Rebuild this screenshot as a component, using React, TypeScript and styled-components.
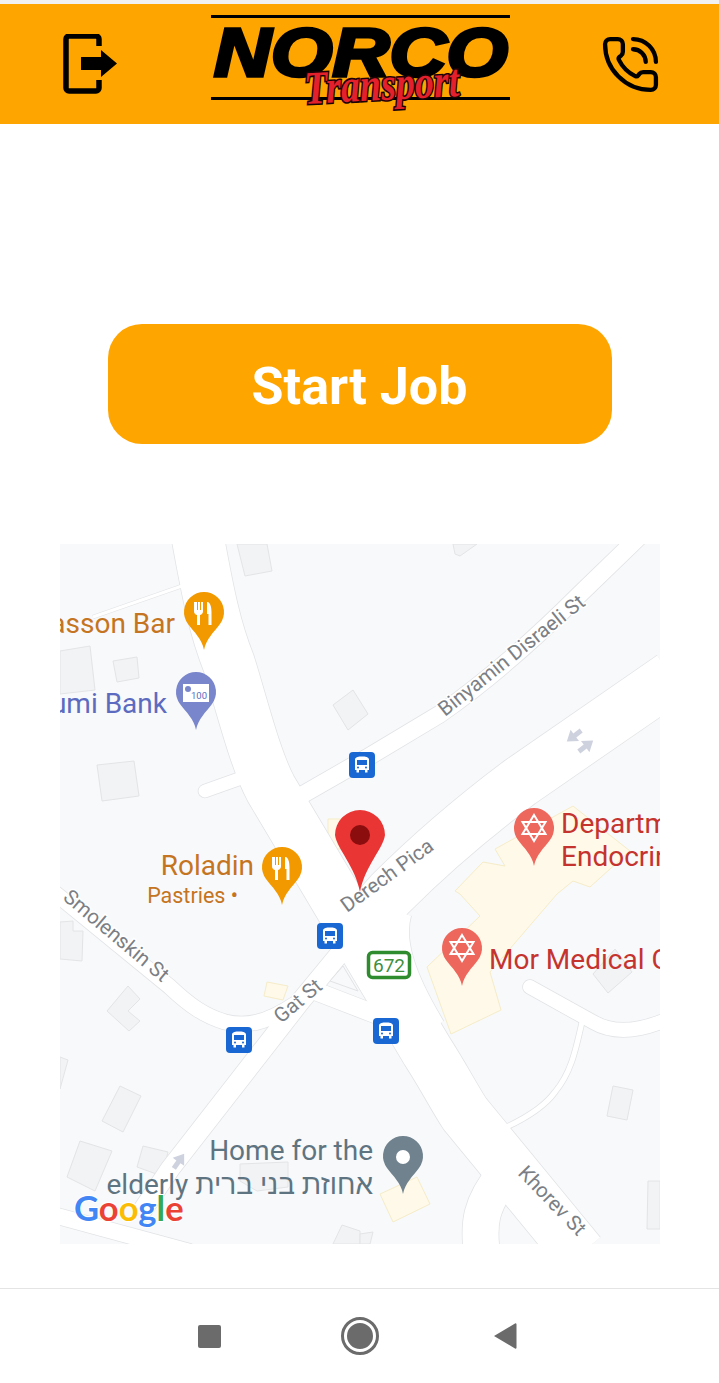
import React, { FC } from "react";
import styled, { createGlobalStyle } from "styled-components";
import { PhoneCall } from "lucide-react";

const GlobalStyle = createGlobalStyle`
  html, body {
    margin: 0;
    padding: 0;
    background: #fff;
    font-family: Roboto, "Liberation Sans", sans-serif;
  }
`;

const Page = styled.div`
  width: 719px;
  height: 1383px;
  display: flex;
  flex-direction: column;
  overflow: hidden;
`;

const StatusStrip = styled.div`
  height: 4px;
  background: #f1f1f1;
`;

const Header = styled.header`
  height: 120px;
  background: #ffa500;
  display: flex;
  align-items: center;
  justify-content: space-between;
  padding: 0 58px 0 63px;
`;

const ExitIcon = styled.svg`
  width: 54px;
  height: 60px;
  display: block;
`;

const PhoneIcon = styled(PhoneCall)`
  display: block;
  margin-left: -5px;
`;

const Logo = styled.svg`
  width: 300px;
  height: 120px;
  display: block;
`;

const NorcoText = styled.text`
  font-family: "Liberation Sans", sans-serif;
  font-weight: 700;
  font-style: italic;
  font-size: 68px;
  fill: #000;
  stroke: #000;
  stroke-width: 3.5px;
`;

const TransportText = styled.text`
  font-family: "Liberation Serif", serif;
  font-weight: 700;
  font-style: italic;
  font-size: 36px;
  fill: #e3202b;
  stroke: #1a0305;
  stroke-width: 2.5px;
  paint-order: stroke;
`;

const Main = styled.main`
  flex: 1;
  display: flex;
  flex-direction: column;
  align-items: center;
  padding-top: 200px;
`;

const StartButton = styled.button`
  width: 504px;
  height: 120px;
  border: 0;
  border-radius: 34px;
  background: #ffa500;
  color: #fff;
  font-family: Roboto, sans-serif;
  font-weight: 700;
  font-size: 52px;
  padding: 5px 0 0;
`;

const MapFrame = styled.div`
  width: 600px;
  height: 700px;
  margin-top: 100px;
  overflow: hidden;
  background: #f8f9fa;
`;

const MapSvg = styled.svg`
  width: 600px;
  height: 700px;
  display: block;
`;

const Label = styled.text<{ $color: string; $size?: number }>`
  font-family: Roboto, "Liberation Sans", sans-serif;
  font-size: ${(p) => p.$size ?? 28}px;
  fill: ${(p) => p.$color};
`;

const StreetLabel = styled.text`
  font-family: Roboto, sans-serif;
  font-size: 20.5px;
  fill: #7b7f85;
  stroke: #fff;
  stroke-width: 3px;
  paint-order: stroke;
`;

const GoogleMark = styled.text`
  font-family: Lato, sans-serif;
  font-size: 34.5px;
  font-weight: 700;
  stroke: #fff;
  stroke-width: 2px;
  paint-order: stroke;
`;

const NavBar = styled.nav`
  height: 94px;
  border-top: 1px solid #e4e4e4;
  display: grid;
  grid-template-columns: repeat(3, 150px);
  justify-content: center;
  justify-items: center;
  align-items: center;
`;

const NavSquare = styled.div`
  width: 23px;
  height: 23px;
  border-radius: 2px;
  background: #6b6b6b;
`;

const NavCircle = styled.div`
  width: 26px;
  height: 26px;
  border-radius: 50%;
  background: #6b6b6b;
  border: 3px solid #fff;
  outline: 3px solid #6b6b6b;
`;

const NavBack = styled.svg`
  width: 24px;
  height: 28px;
  display: block;
  margin-right: 9px;
`;

type Road = { d: string; w: number; cap?: "round" | "butt" };

const roads: Road[] = [
  { d: "M138 -5C148 50 155 85 169 120C183 165 195 215 211 245L367 507C385 535 395 555 405 570L520 710", w: 52 },
  { d: "M612 133L460 238C420 268 370 310 330 350L290 395", w: 52 },
  { d: "M327 365C317 400 332 440 362 490", w: 50 },
  { d: "M300 385L240 458L110 625L80 670", w: 19 },
  { d: "M580 -8L520 50C480 90 430 135 380 170L310 212L235 255", w: 17 },
  { d: "M-10 345L110 443C130 462 145 472 165 478C185 483 205 480 235 460", w: 15 },
  { d: "M145 247L190 231", w: 13, cap: "round" },
  { d: "M250 445L320 472", w: 18 },
  { d: "M470 443L533 478C550 488 575 490 610 474", w: 14, cap: "round" },
  { d: "M522 478C515 510 510 530 495 548C485 562 465 575 440 586", w: 5 },
  { d: "M445 630C420 660 418 680 422 710", w: 36 },
  { d: "M-10 670L130 708", w: 16 },
  { d: "M122 42L33 73", w: 3 },
];

const buildings: string[] = [
  "177,0 207,0 212,27 185,32",
  "0,107 30,102 35,146 0,150",
  "53,117 77,113 79,134 57,138",
  "37,221 74,217 79,252 42,257",
  "273,161 293,146 308,170 288,186",
  "393,0 417,0 400,12 395,10",
  "0,378 13,377 13,387 23,387 22,417 0,415",
  "68,442 80,455 68,467 80,477 69,487 47,467",
  "0,513 8,516 0,545",
  "60,542 81,552 63,588 42,577",
  "20,597 52,607 35,647 7,633",
  "83,602 108,608 102,632 77,623",
  "180,620 228,618 228,643 197,647 180,637",
  "273,700 282,681 300,687 300,700",
  "553,542 573,546 567,576 547,572",
  "588,637 600,637 600,685 587,685",
  "533,430 548,449 572,428 555,405",
  "300,690 313,688 310,700 300,700",
];

const yellowBlocks: string[] = [
  "395,347 423,318 445,322 435,305 513,262 570,307 530,343 513,337 497,350 430,428 441,466 391,490 367,423 420,372 400,350",
  "320,650 357,633 370,660 333,678",
  "207,438 228,442 223,456 204,452",
  "268,275 285,275 285,305 268,305",
];

const PIN = "M20 58C18 47 10 40 4 32A20 20 0 1 1 36 32C30 40 22 47 20 58Z";

const Pin: FC<{ x: number; y: number; color: string; children?: React.ReactNode }> = ({ x, y, color, children }) => (
  <g transform={`translate(${x} ${y})`}>
    <path d={PIN} fill={color} />
    {children}
  </g>
);

const Cutlery: FC = () => (
  <path
    fill="#fff"
    d="M10 10v9a4 4 0 0 0 3 4v10h3V23a4 4 0 0 0 3-4v-9h-2v8h-1v-8h-2v8h-1v-8zM23 10h1c2 1 3.500 4 3.500 10v13h-3V22h-1.500z"
  />
);

const Star: FC = () => (
  <g fill="none" stroke="#fff" strokeWidth={2}>
    <polygon points="20,7 31.500,26 8.500,26" />
    <polygon points="20,33 8.500,14 31.500,14" />
  </g>
);

const BusStop: FC<{ x: number; y: number }> = ({ x, y }) => (
  <g transform={`translate(${x} ${y})`}>
    <rect width={26} height={26} rx={4} fill="#1967d2" />
    <path fill="#fff" d="M6 7.500C6 5 10 4.500 13 4.500s7 .5 7 3V18h-1.500v2.500H16V18h-6v2.500H7.500V18H6zM8 8v5h10V8z" />
    <circle cx={9} cy={15.500} r={1} fill="#1967d2" />
    <circle cx={17} cy={15.500} r={1} fill="#1967d2" />
  </g>
);

const Arrow: FC<{ x: number; y: number; angle: number }> = ({ x, y, angle }) => (
  <path
    transform={`translate(${x} ${y}) rotate(${angle})`}
    fill="#ced2de"
    d="M0 -9L7 1H2.500V9H-2.500V1H-7Z"
  />
);

const RoadLayer: FC = () => (
  <g fill="none">
    {roads.map((r) => (
      <path key={`e${r.d}`} d={r.d} stroke="#e1e3e6" strokeWidth={r.w + 1.5} strokeLinecap={r.cap ?? "butt"} />
    ))}
    {roads.map((r) => (
      <path key={`r${r.d}`} d={r.d} stroke="#fff" strokeWidth={r.w} strokeLinecap={r.cap ?? "butt"} />
    ))}
  </g>
);

const LocationMap: FC = () => (
  <MapSvg viewBox="0 0 600 700">
    {buildings.map((p) => (
      <polygon key={p} points={p} fill="#f1f3f4" stroke="#e3e4e6" />
    ))}
    {yellowBlocks.map((p) => (
      <polygon key={p} points={p} fill="#fef9e8" stroke="#f6ecc9" />
    ))}
    <RoadLayer />
    <polygon points="283,422 270,437 298,447" fill="#f8f9fa" stroke="#e1e3e6" />

    <Arrow x={514} y={192} angle={-127} />
    <Arrow x={526} y={202} angle={53} />
    <Arrow x={119} y={617} angle={35} />

    <StreetLabel transform="translate(385 173) rotate(-38.500)">Binyamin Disraeli St</StreetLabel>
    <StreetLabel transform="translate(287 369) rotate(-36)">Derech Pica</StreetLabel>
    <StreetLabel transform="translate(2 355) rotate(40)">Smolenskin St</StreetLabel>
    <StreetLabel transform="translate(221 480) rotate(-40)">Gat St</StreetLabel>
    <StreetLabel transform="translate(457 630) rotate(46)">Khorev St</StreetLabel>

    <Label $color="#c5741f" x={115} y={89} textAnchor="end">asson Bar</Label>
    <Label $color="#5c6bc0" x={107} y={169} textAnchor="end">umi Bank</Label>
    <Label $color="#c5741f" x={194} y={331} textAnchor="end">Roladin</Label>
    <Label $color="#c5741f" $size={21.500} x={178} y={359} textAnchor="end">Pastries •</Label>
    <Label $color="#c5332f" x={501} y={289}>Departm</Label>
    <Label $color="#c5332f" x={501} y={322}>Endocrin</Label>
    <Label $color="#c5332f" x={429} y={425}>Mor Medical C</Label>
    <Label $color="#5f7481" x={313} y={616} textAnchor="end">Home for the</Label>
    <Label $color="#5f7481" x={313} y={650} textAnchor="end">elderly אחוזת בני ברית</Label>

    <Pin x={124} y={48} color="#f29900"><Cutlery /></Pin>
    <Pin x={202} y={303} color="#f29900"><Cutlery /></Pin>
    <Pin x={116} y={128} color="#7986cb">
      <rect x={7} y={12} width={26} height={18} fill="#fff" />
      <circle cx={12} cy={17} r={3} fill="#7986cb" />
      <text x={15} y={27} fontSize={9.500} fontFamily="Roboto, sans-serif" fill="#5c6bc0">100</text>
    </Pin>
    <Pin x={454} y={264} color="#ee675c"><Star /></Pin>
    <Pin x={382} y={384} color="#ee675c"><Star /></Pin>
    <Pin x={323} y={592} color="#70828e">
      <circle cx={20} cy={21} r={7} fill="#fff" />
    </Pin>

    <BusStop x={289} y={208} />
    <BusStop x={257} y={379} />
    <BusStop x={166} y={483} />
    <BusStop x={313} y={474} />

    <rect x={308.500} y={408.500} width={41} height={25} rx={4} fill="#fff" stroke="#2e8b2e" strokeWidth={3.500} />
    <Label $color="#3f8f3f" $size={19} x={329} y={428} textAnchor="middle">672</Label>

    <path d="M300 348C295 322 277 305 275 291A25 25 0 1 1 325 291C323 305 305 322 300 348Z" fill="#ea3535" />
    <circle cx={300} cy={291} r={10} fill="#8b0d0d" />

    <GoogleMark x={14} y={677}>
      <tspan fill="#4285f4">G</tspan>
      <tspan fill="#ea4335">o</tspan>
      <tspan fill="#fbbc05">o</tspan>
      <tspan fill="#4285f4">g</tspan>
      <tspan fill="#34a853">l</tspan>
      <tspan fill="#ea4335">e</tspan>
    </GoogleMark>
  </MapSvg>
);

const App: FC = () => (
  <Page>
    <GlobalStyle />
    <StatusStrip />
    <Header>
      <ExitIcon viewBox="0 0 54 60">
        <path d="M36 12V5a3 3 0 0 0-3-3H6a3 3 0 0 0-3 3v49a3 3 0 0 0 3 3h27a3 3 0 0 0 3-3V46" fill="none" stroke="#000" strokeWidth={5.500} />
        <path d="M18 23H38V16L54 29.500L38 43V36H18Z" fill="#000" />
      </ExitIcon>
      <Logo viewBox="0 0 300 120">
        <rect x={0} y={11} width={299} height={3} fill="#000" />
        <rect x={0} y={93} width={299} height={3} fill="#000" />
        <NorcoText x={3} y={72} textLength={294} lengthAdjust="spacingAndGlyphs">NORCO</NorcoText>
        <g transform="translate(94 100) rotate(-3) scale(1 1.3)">
          <TransportText x={0} y={0} textLength={155} lengthAdjust="spacingAndGlyphs">Transport</TransportText>
        </g>
      </Logo>
      <PhoneIcon size={61} color="#000" strokeWidth={1.700} />
    </Header>
    <Main>
      <StartButton>Start Job</StartButton>
      <MapFrame>
        <LocationMap />
      </MapFrame>
    </Main>
    <NavBar>
      <NavSquare />
      <NavCircle />
      <NavBack viewBox="0 0 24 28">
        <path d="M1 14L22 1.500a1 1 0 0 1 1.500 1v23a1 1 0 0 1-1.500 1Z" fill="#6b6b6b" />
      </NavBack>
    </NavBar>
  </Page>
);

export default App;
